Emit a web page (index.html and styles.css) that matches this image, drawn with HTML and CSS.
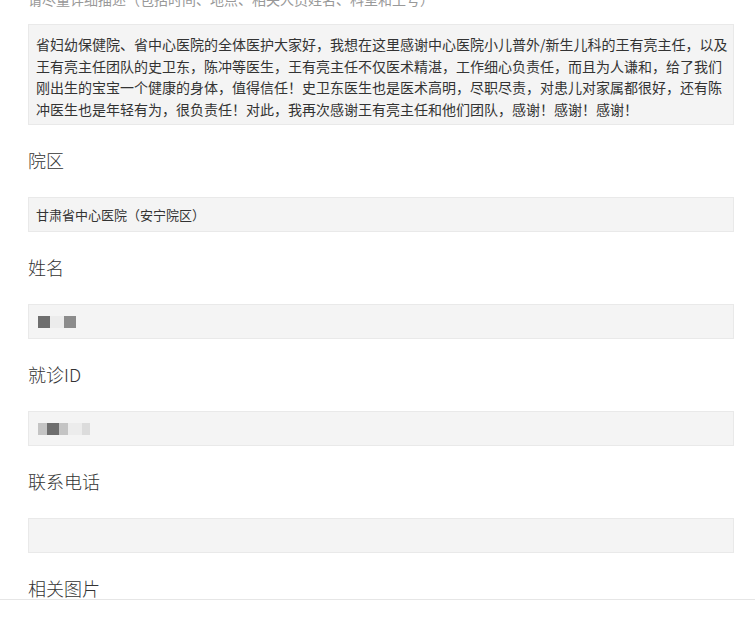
FILE: index.html
```html
<!DOCTYPE html>
<html lang="zh-CN">
<head>
    <meta charset="UTF-8">
    <meta name="viewport" content="width=device-width, initial-scale=1.0">
    <title>表扬信</title>
    <link rel="stylesheet" href="styles.css">
</head>
<body>
    <div class="form">
        <div class="hint">请尽量详细描述（包括时间、地点、相关人员姓名、科室和工号）</div>

        <div class="textarea">
            <span class="line">省妇幼保健院、省中心医院的全体医护大家好，我想在这里感谢中心医院小儿普外/新生儿科的王有亮主任，以及</span>
            <span class="line">王有亮主任团队的史卫东，陈冲等医生，王有亮主任不仅医术精湛，工作细心负责任，而且为人谦和，给了我们</span>
            <span class="line">刚出生的宝宝一个健康的身体，值得信任！史卫东医生也是医术高明，尽职尽责，对患儿对家属都很好，还有陈</span>
            <span class="line">冲医生也是年轻有为，很负责任！对此，我再次感谢王有亮主任和他们团队，感谢！感谢！感谢！</span>
        </div>

        <div class="label">院区</div>
        <div class="field">甘肃省中心医院（安宁院区）</div>

        <div class="label">姓名</div>
        <div class="field masked">
            <span class="px dark"></span><span class="px gap"></span><span class="px mid"></span>
        </div>

        <div class="label">就诊ID</div>
        <div class="field masked">
            <span class="px light"></span><span class="px dark"></span><span class="px light"></span><span class="px gap"></span><span class="px faint"></span>
        </div>

        <div class="label">联系电话</div>
        <div class="field masked"></div>

        <div class="label">相关图片</div>
    </div>

    <div class="footer"></div>
</body>
</html>
```

FILE: styles.css
```css
body {
    margin: 0;
    background: #fff;
    color: #333;
    font-family: "Noto Sans CJK SC", "Noto Sans", sans-serif;
    overflow: hidden;
}
.form {
    padding: 0 21px 0 28px;
}
.hint {
    margin-top: -11px;
    font-size: 14px;
    line-height: 20px;
    color: #999;
    white-space: nowrap;
}
.textarea {
    margin-top: 15px;
    background: #f4f4f4;
    border: 1px solid #e9e9e9;
    padding: 9px 7px 4px;
    font-size: 14px;
    line-height: 21.5px;
    color: #333;
}
.textarea .line {
    display: block;
    white-space: nowrap;
}
.label {
    height: 72px;
    line-height: 70px;
    font-size: 18px;
    font-weight: 300;
    color: #333;
}
.field {
    box-sizing: border-box;
    height: 35px;
    background: #f4f4f4;
    border: 1px solid #e9e9e9;
    padding: 0 7px;
    font-size: 13px;
    line-height: 33px;
    color: #333;
}
.masked {
    display: flex;
    align-items: center;
    padding-left: 9px;
}
.px {
    display: block;
    width: 12px;
    height: 12px;
}
.px.dark { background: #6e6e6e; }
.px.mid { background: #8c8c8c; }
.px.light { background: #c4c4c4; width: 9px; }
.px.faint { background: #dcdcdc; width: 8px; }
.px.gap { background: #ececec; width: 14px; }
.footer {
    position: fixed;
    left: 0;
    right: 0;
    bottom: 0;
    height: 21px;
    background: #fff;
    border-top: 1px solid #e6e6e6;
}
```
